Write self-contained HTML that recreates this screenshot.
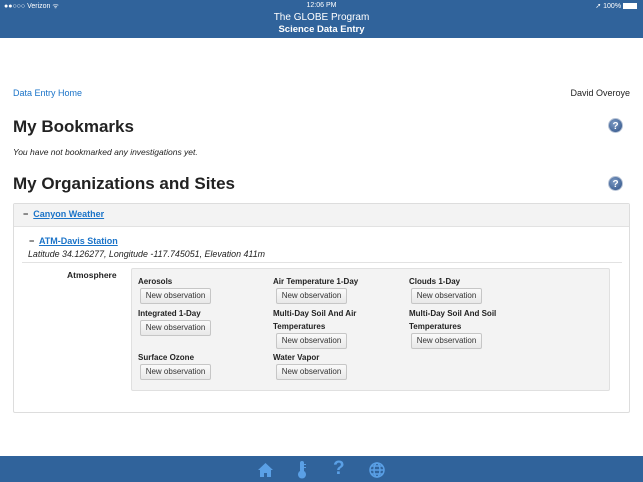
<!DOCTYPE html>
<html><head><style>
*{margin:0;padding:0;box-sizing:border-box}
body{width:643px;height:482px;position:relative;background:#fff;font-family:"Liberation Sans",sans-serif;overflow:hidden;color:#222}
.a{position:absolute;white-space:nowrap}
.hdr{left:0;top:0;width:643px;height:38px;background:#30639b;color:#fff}
.ftr{left:0;top:456px;width:643px;height:26px;background:#30639b}
.lbl{font-size:8px;font-weight:bold;color:#222}
.btn{font-size:8px;color:#333;width:71px;height:16px;border:1px solid #c6c6c6;border-radius:2px;background:linear-gradient(#fafafa,#e8e8e8);text-align:center;line-height:14px}
.q{width:15px;height:15px;border-radius:50%;background:radial-gradient(circle at 40% 35%,#7d9bc4,#2c4f85);color:#fff;font-size:10px;font-weight:bold;text-align:center;line-height:15px;border:1px solid #b8c4d6}
a{color:#1a73c8}
</style></head><body>
<div class="a hdr">
 <div class="a" style="left:4px;top:2px;font-size:7px">●●○○○ Verizon ᯤ</div>
 <div class="a" style="left:0;width:643px;text-align:center;top:2px;font-size:7px">12:06 PM</div>
 <div class="a" style="right:6px;top:2px;font-size:7px">➚ 100% <span style="display:inline-block;width:14px;height:6px;background:#fff;vertical-align:middle"></span></div>
 <div class="a" style="left:0;width:643px;text-align:center;top:12px;font-size:10px">The GLOBE Program</div>
 <div class="a" style="left:0;width:643px;text-align:center;top:24px;font-size:9.5px;font-weight:bold">Science Data Entry</div>
</div>
<div class="a" style="left:13px;top:88px;font-size:9px;color:#1a73c8">Data Entry Home</div>
<div class="a" style="right:13px;top:88px;font-size:9px">David Overoye</div>
<div class="a" style="left:13px;top:117px;font-size:17px;font-weight:bold">My Bookmarks</div>
<div class="a q" style="left:608px;top:118px">?</div>
<div class="a" style="left:13px;top:147px;font-size:8.5px;font-style:italic">You have not bookmarked any investigations yet.</div>
<div class="a" style="left:13px;top:174px;font-size:17px;font-weight:bold">My Organizations and Sites</div>
<div class="a q" style="left:608px;top:176px">?</div>
<div class="a" style="left:13px;top:203px;width:617px;height:210px;border:1px solid #ddd;border-radius:2px"></div>
<div class="a" style="left:14px;top:204px;width:615px;height:23px;background:#f3f3f3;border-bottom:1px solid #e2e2e2"></div>
<div class="a" style="left:23px;top:209px;font-size:9px;font-weight:bold">−&nbsp; <a style="text-decoration:underline">Canyon Weather</a></div>
<div class="a" style="left:29px;top:236px;font-size:9px;font-weight:bold">−&nbsp; <a style="text-decoration:underline">ATM-Davis Station</a></div>
<div class="a" style="left:28px;top:249px;font-size:8.9px;font-style:italic">Latitude 34.126277, Longitude -117.745051, Elevation 411m</div>
<div class="a" style="left:22px;top:262px;width:600px;height:1px;background:#e2e2e2"></div>
<div class="a" style="left:67px;top:270px;font-size:8.5px;font-weight:bold">Atmosphere</div>
<div class="a" style="left:131px;top:268px;width:479px;height:123px;background:#f3f3f3;border:1px solid #e0e0e0;border-radius:2px"></div>
<div class="a lbl" style="left:138px;top:277px">Aerosols</div>
<div class="a btn" style="left:140px;top:288px">New observation</div>
<div class="a lbl" style="left:138px;top:309px">Integrated 1-Day</div>
<div class="a btn" style="left:140px;top:320px">New observation</div>
<div class="a lbl" style="left:138px;top:353px">Surface Ozone</div>
<div class="a btn" style="left:140px;top:364px">New observation</div>
<div class="a lbl" style="left:273px;top:277px">Air Temperature 1-Day</div>
<div class="a btn" style="left:276px;top:288px">New observation</div>
<div class="a lbl" style="left:273px;top:309px">Multi-Day Soil And Air</div>
<div class="a lbl" style="left:273px;top:322px">Temperatures</div>
<div class="a btn" style="left:276px;top:333px">New observation</div>
<div class="a lbl" style="left:273px;top:353px">Water Vapor</div>
<div class="a btn" style="left:276px;top:364px">New observation</div>
<div class="a lbl" style="left:409px;top:277px">Clouds 1-Day</div>
<div class="a btn" style="left:411px;top:288px">New observation</div>
<div class="a lbl" style="left:409px;top:309px">Multi-Day Soil And Soil</div>
<div class="a lbl" style="left:409px;top:322px">Temperatures</div>
<div class="a btn" style="left:411px;top:333px">New observation</div>
<div class="a ftr">
 <svg class="a" style="left:258px;top:7px" width="15" height="14" viewBox="0 0 15 14"><path d="M7.5 0L0 7h2v7h4v-4h3v4h4V7h2z" fill="#5aa0e6"/></svg>
 <svg class="a" style="left:297px;top:5px" width="10" height="18" viewBox="0 0 10 18"><rect x="3" y="0" width="4" height="12" rx="2" fill="#5aa0e6"/><circle cx="5" cy="13.5" r="4" fill="#5aa0e6"/><rect x="6" y="3" width="3" height="1" fill="#5aa0e6"/><rect x="6" y="6" width="3" height="1" fill="#5aa0e6"/></svg>
 <div class="a" style="left:333px;top:2px;font-size:19px;font-weight:bold;color:#5aa0e6">?</div>
 <svg class="a" style="left:369px;top:6px" width="16" height="16" viewBox="0 0 16 16" fill="none" stroke="#5aa0e6" stroke-width="1.5"><circle cx="8" cy="8" r="7"/><ellipse cx="8" cy="8" rx="3" ry="7"/><path d="M1 8h14M2.5 4h11M2.5 12h11"/></svg>
</div>
</body></html>
